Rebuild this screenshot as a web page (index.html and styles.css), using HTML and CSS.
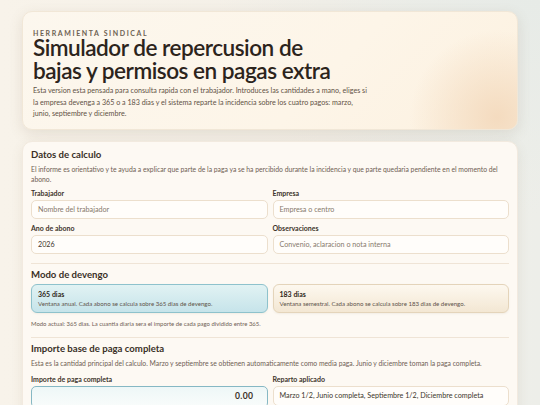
FILE: index.html
```html
<!DOCTYPE html>
<html lang="es">
<head>
<meta charset="utf-8">
<title>Simulador de repercusion</title>
<link rel="stylesheet" href="styles.css">
</head>
<body>
<div class="page">
  <header class="hero">
    <div class="kicker">HERRAMIENTA SINDICAL</div>
    <h1>Simulador de repercusion de<br>bajas y permisos en pagas extra</h1>
    <p class="lead">Esta version esta pensada para consulta rapida con el trabajador. Introduces las cantidades a mano, eliges si la empresa devenga a 365 o a 183 dias y el sistema reparte la incidencia sobre los cuatro pagos: marzo, junio, septiembre y diciembre.</p>
  </header>

  <section class="card">
    <h2>Datos de calculo</h2>
    <p class="desc">El informe es orientativo y te ayuda a explicar que parte de la paga ya se ha percibido durante la incidencia y que parte quedaria pendiente en el momento del abono.</p>
    <div class="grid">
      <div class="field">
        <label>Trabajador</label>
        <div class="input placeholder">Nombre del trabajador</div>
      </div>
      <div class="field">
        <label>Empresa</label>
        <div class="input placeholder">Empresa o centro</div>
      </div>
      <div class="field">
        <label>Ano de abono</label>
        <div class="input">2026</div>
      </div>
      <div class="field">
        <label>Observaciones</label>
        <div class="input placeholder">Convenio, aclaracion o nota interna</div>
      </div>
    </div>

    <div class="divider"></div>

    <h2>Modo de devengo</h2>
    <div class="grid options">
      <div class="option active">
        <div class="opt-title">365 dias</div>
        <div class="opt-desc">Ventana anual. Cada abono se calcula sobre 365 dias de devengo.</div>
      </div>
      <div class="option">
        <div class="opt-title">183 dias</div>
        <div class="opt-desc">Ventana semestral. Cada abono se calcula sobre 183 dias de devengo.</div>
      </div>
    </div>
    <p class="note">Modo actual: 365 dias. La cuantia diaria sera el importe de cada pago dividido entre 365.</p>

    <div class="divider"></div>

    <h2>Importe base de paga completa</h2>
    <p class="desc desc-tight">Esta es la cantidad principal del calculo. Marzo y septiembre se obtienen automaticamente como media paga. Junio y diciembre toman la paga completa.</p>
    <div class="grid">
      <div class="field">
        <label>Importe de paga completa</label>
        <div class="input amount">0.00</div>
      </div>
      <div class="field">
        <label>Reparto aplicado</label>
        <div class="input filled">Marzo 1/2, Junio completa, Septiembre 1/2, Diciembre completa</div>
      </div>
    </div>
  </section>
</div>
</body>
</html>
```

FILE: styles.css
```css
* { box-sizing: border-box; }
html, body { margin: 0; padding: 0; }
body {
  font-family: "Lato", "Noto Sans", sans-serif;
  color: #3a3128;
  background:
    radial-gradient(ellipse 60% 50% at 100% 0%, #e7ebe7 0%, rgba(231,235,231,0) 100%),
    linear-gradient(90deg, #f8f3ea 0%, #f3efe7 60%, #edeee9 100%);
  min-height: 405px;
  overflow: hidden;
}
.page {
  padding: 11px 22px 0 22px;
  display: flex;
  flex-direction: column;
  gap: 11px;
}
.hero {
  border-radius: 10px;
  padding: 17px 11px 9px 10px;
  background:
    radial-gradient(circle at 96% 90%, #f4dbbf 0%, rgba(245,220,192,0) 18%),
    linear-gradient(135deg, #fcf7ee 0%, #fdf5e8 60%, #fcf1e0 100%);
  border: 1px solid #f1e7d7;
  box-shadow: 0 4px 14px rgba(120, 100, 70, 0.14);
}
.kicker {
  font-size: 7px;
  font-weight: 700;
  letter-spacing: 1.6px;
  color: #6d6152;
  line-height: 8px;
}
h1 {
  margin: 0 0 3px 0;
  font-size: 22.6px;
  line-height: 22.5px;
  font-weight: 600;
  letter-spacing: -0.5px;
  color: #2c241c;
}
.lead {
  margin: 0;
  font-size: 7.15px;
  line-height: 11.5px;
  color: #5f5245;
  max-width: 337px;
}
.card {
  border-radius: 10px;
  padding: 7px 8px 20px 8px;
  background: #fdf9f3;
  border: 1px solid #f2eadf;
  box-shadow: 0 3px 12px rgba(120, 100, 70, 0.1);
}
h2 {
  margin: 0 0 3px 0;
  font-size: 9.6px;
  line-height: 12px;
  font-weight: 700;
  color: #3a3027;
}
.desc {
  margin: 0 0 4px 0;
  font-size: 6.8px;
  line-height: 10.5px;
  color: #6f6054;
}
.desc-tight { margin-bottom: 7px; }
.grid {
  display: grid;
  grid-template-columns: 1fr 1fr;
  column-gap: 5px;
  row-gap: 5px;
}
.field {
  display: flex;
  flex-direction: column;
  gap: 3px;
}
label {
  font-size: 7px;
  line-height: 8px;
  font-weight: 700;
  color: #3e342b;
}
.input {
  height: 19px;
  border: 1px solid #ecdfcd;
  border-radius: 5px;
  background: #fffdfa;
  font-size: 7.2px;
  line-height: 17px;
  padding: 0 6px;
  color: #3e342b;
  white-space: nowrap;
  overflow: hidden;
}
.input.placeholder { color: #877a6d; }
.input.amount {
  height: 22px;
  border: 1.5px solid #86b8c4;
  background: linear-gradient(180deg, #eef7f7 0%, #f9fcfb 100%);
  text-align: right;
  font-size: 8.6px;
  font-weight: 700;
  line-height: 19px;
  padding-right: 13px;
  color: #3a3027;
  letter-spacing: 0.4px;
}
.input.filled { height: 20px; line-height: 18px; color: #40362c; }
.divider {
  height: 1px;
  background: #efe4d6;
  margin: 9px 0 5px 0;
}
.options { row-gap: 0; }
.option {
  height: 29px;
  border-radius: 6px;
  padding: 5px 6px;
  border: 1px solid #e4d4ba;
  background: linear-gradient(180deg, #fdf8ef 0%, #f3e7d3 100%);
  box-shadow: 0 1px 2px rgba(120, 100, 70, 0.08);
}
.option.active {
  border: 1px solid #8ec2cc;
  background: linear-gradient(180deg, #e1f2f3 0%, #c6e4ea 100%);
}
.opt-title {
  font-size: 7px;
  line-height: 9px;
  font-weight: 700;
  color: #2f2820;
}
.opt-desc {
  font-size: 6.1px;
  line-height: 9px;
  color: #60534a;
}
.note {
  margin: 7px 0 0 0;
  font-size: 5.95px;
  line-height: 8px;
  color: #6f6054;
}
```
